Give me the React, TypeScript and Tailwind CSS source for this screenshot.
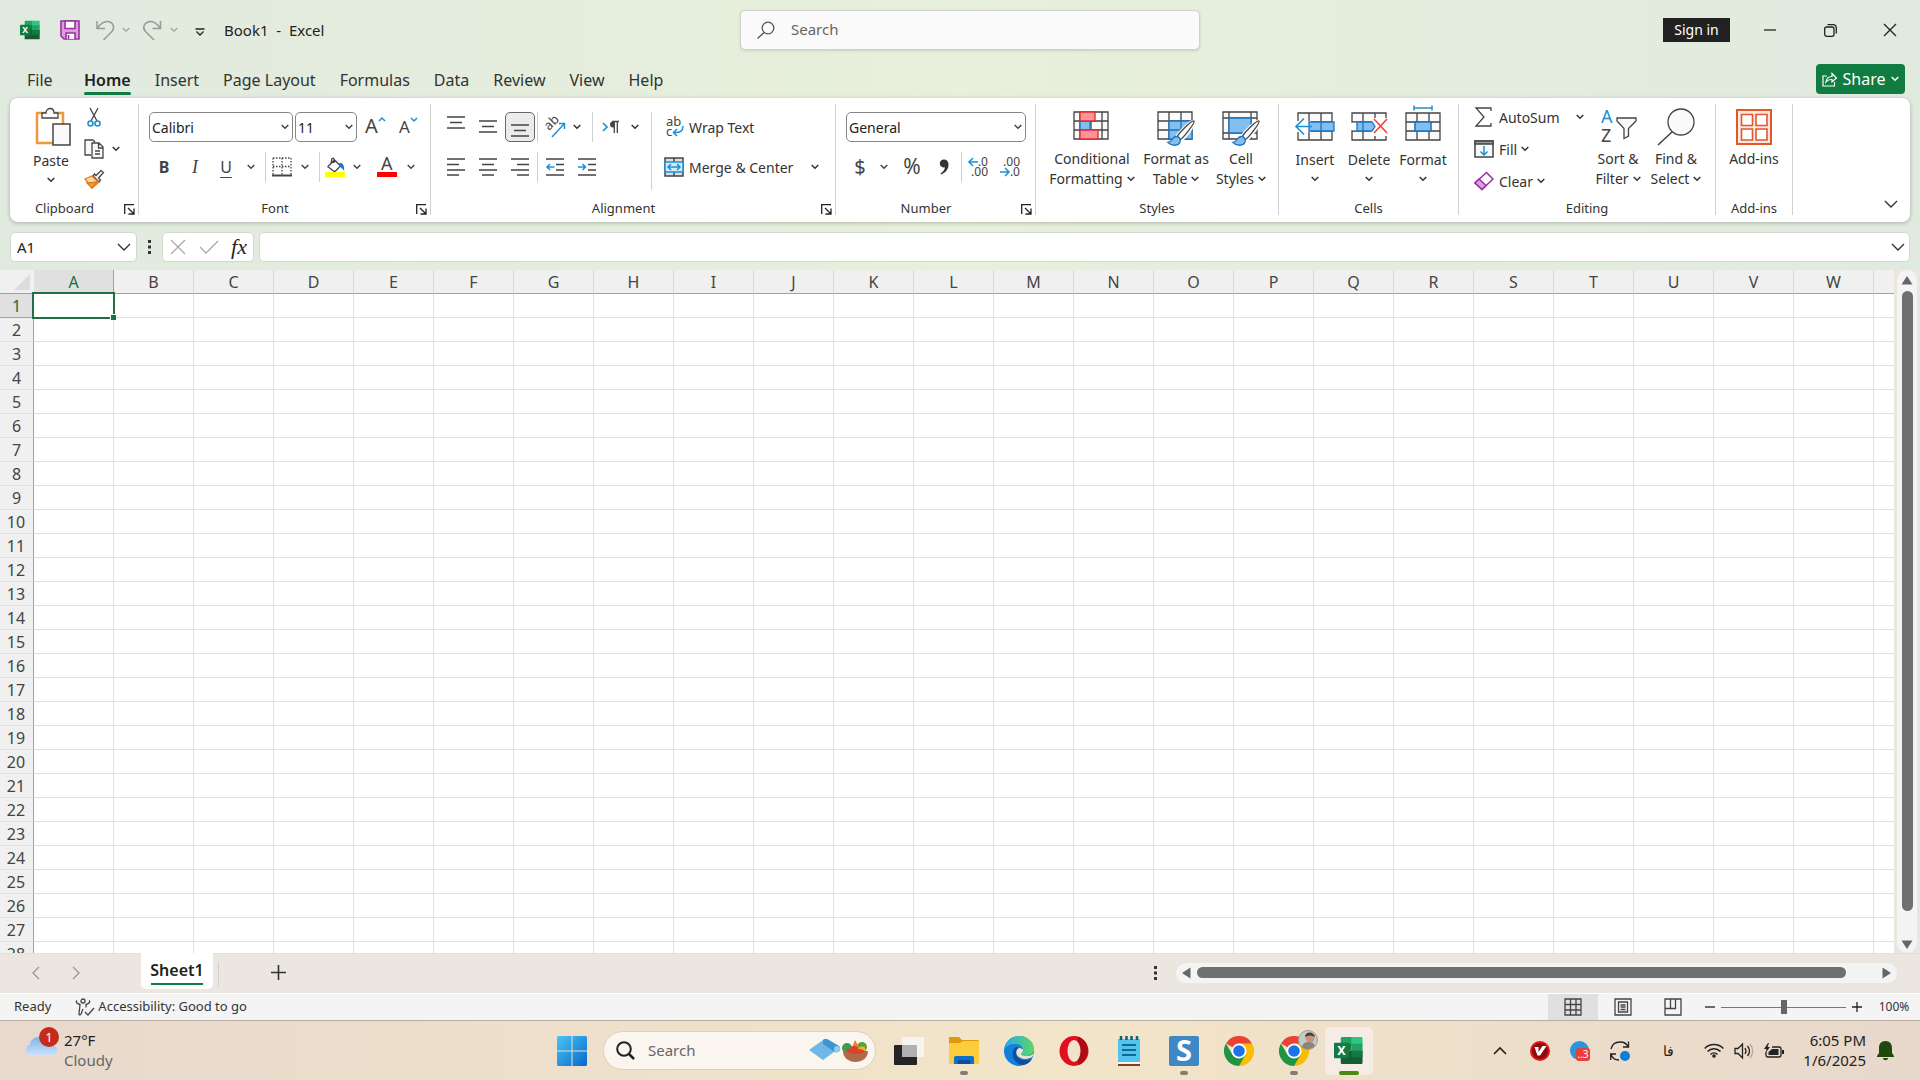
import type { ReactNode } from 'react'

const columns = 'ABCDEFGHIJKLMNOPQRSTUVW'.split('')
const rows = Array.from({ length: 28 }, (_, i) => i + 1)
const tabs = ['File', 'Home', 'Insert', 'Page Layout', 'Formulas', 'Data', 'Review', 'View', 'Help']

function Chevron({ className = '' }: { className?: string }) {
  return (
    <svg width="8" height="6" viewBox="0 0 8 6" fill="none" stroke="currentColor" strokeWidth="1.5" className={`shrink-0 ${className}`}>
      <path d="M.7 1 4 4.3 7.3 1" />
    </svg>
  )
}

function WideChevron() {
  return (
    <svg width="14" height="8" viewBox="0 0 14 8" fill="none" stroke="#333" strokeWidth="1.4" className="shrink-0">
      <path d="M1 1l6 6 6-6" />
    </svg>
  )
}

function Svg({ w, h, children, className = '' }: { w: number; h: number; children: ReactNode; className?: string }) {
  return (
    <svg width={w} height={h} viewBox={`0 0 ${w} ${h}`} fill="none" stroke="#444" strokeWidth="1.3" className={`shrink-0 overflow-visible ${className}`}>
      {children}
    </svg>
  )
}

function Btn({ label, className = '', children }: { label: string; className?: string; children: ReactNode }) {
  return (
    <button type="button" aria-label={label} className={`flex h-[30px] shrink-0 items-center justify-center ${className}`}>
      {children}
    </button>
  )
}

function More({ label, className = 'w-5' }: { label: string; className?: string }) {
  return (
    <Btn label={label} className={className}>
      <Chevron />
    </Btn>
  )
}

function Sep({ className = 'w-1' }: { className?: string }) {
  return (
    <div className={`flex h-[30px] shrink-0 justify-center ${className}`}>
      <div className="w-px bg-[#d0d0d0]" />
    </div>
  )
}

function Group({ name, launcher, className, children }: { name: string; launcher?: boolean; className: string; children: ReactNode }) {
  return (
    <section aria-label={name} className={`flex shrink-0 ${className}`}>
      <div className="flex min-w-0 flex-1 flex-col">
        <div className="flex-1">{children}</div>
        <div className="flex h-[25px] items-start">
          <div className="flex-1 text-center text-[13px] leading-[22px]">{name}</div>
          {launcher && (
            <button type="button" aria-label={`${name} settings`} className="mr-[3px] flex h-6 w-4 items-center justify-end">
              <Svg w={11} h={11}>
                <path d="M.7 10V.7H10M4 4l5.5 5.5M10 4.5V10H4.5" stroke="#222" />
              </Svg>
            </button>
          )}
        </div>
      </div>
      <div className="mt-1.5 mb-[7px] w-px bg-[#d0d0d0]" />
    </section>
  )
}

function Combo({ label, value, className }: { label: string; value: string; className: string }) {
  return (
    <div className={`relative h-[30px] shrink-0 ${className}`}>
      <select aria-label={label} className="h-full w-full appearance-none rounded-[5px] border border-[#868686] bg-white pl-0.5 text-[14px] text-[#222]">
        <option>{value}</option>
      </select>
      <Chevron className="pointer-events-none absolute top-3 right-1" />
    </div>
  )
}

type BigButtonProps = {
  lines: string[]
  icon: ReactNode
  chevron?: 'inline' | 'below'
  className: string
}

function BigButton({ lines, icon, chevron, className }: BigButtonProps) {
  return (
    <button type="button" className={`flex shrink-0 flex-col items-center text-[14px] leading-5 whitespace-nowrap ${className}`}>
      <span className={`flex ${chevron === 'below' ? 'h-[45px] items-start' : 'h-[44px] items-center'}`}>{icon}</span>
      {lines.map((line, i) => (
        <span key={line} className="flex items-center gap-1">
          {line}
          {chevron === 'inline' && i === lines.length - 1 && <Chevron />}
        </span>
      ))}
      {chevron === 'below' && (
        <span className="flex h-[18px] items-center">
          <Chevron />
        </span>
      )}
    </button>
  )
}

function ExcelLogo({ size }: { size: number }) {
  return (
    <svg width={size} height={size} viewBox="0 0 30 28" className="shrink-0">
      <path d="M8 0h11v9H7V1z" fill="#21a366" />
      <path d="M18 0h10.500q1 0 1 1v8H18z" fill="#33c481" />
      <path d="M7 7h11v7H7z" fill="#107c41" />
      <path d="M18 7h11.500v7H18z" fill="#21a366" />
      <path d="M7 14h22.500v13q0 1-1 1H8q-1 0-1-1z" fill="#185c37" />
      <path d="M18 14h11.500v7H18z" fill="#107c41" />
      <rect y="6" width="15.500" height="16" rx="1" fill="#107c41" />
      <text x="7.700" y="18.500" textAnchor="middle" fontSize="13" fontWeight="700" fill="#fff">X</text>
    </svg>
  )
}

function TitleBar() {
  return (
    <header className="grid h-[60px] grid-cols-[1fr_460px_1fr] items-start pl-5">
      <div className="flex h-[60px] items-center">
        <ExcelLogo size={20} />
        <Btn label="Save" className="ml-5 w-5">
          <Svg w={20} h={20}>
            <path d="M1 1h18v18H4l-3-3z" fill="#d9a0dc" stroke="#9b2fa3" strokeWidth="1.600" />
            <path d="M5 1h10v7.500H5zM6 19v-6h9v6" fill="#fff" stroke="#9b2fa3" strokeWidth="1.600" />
            <path d="M8.500 15v4" stroke="#9b2fa3" strokeWidth="1.600" />
          </Svg>
        </Btn>
        <Btn label="Undo" className="ml-4 w-5">
          <Svg w={20} h={21}>
            <path d="M1 1v7.500h8M1.500 8C5 3 9 1 12 1.500c6 1 7 7 3.500 10.500L7.500 20" stroke="#999" strokeWidth="1.500" />
          </Svg>
        </Btn>
        <Chevron className="ml-1.5 text-[#aaa]" />
        <Btn label="Redo" className="ml-3 w-5">
          <Svg w={20} h={21}>
            <path d="M18.500 1v7.500h-8M18 8C14.500 3 11 1 8 1.500 2 2.500 0 8 3.500 11.500L12 20" stroke="#999" strokeWidth="1.500" />
          </Svg>
        </Btn>
        <Chevron className="ml-2 text-[#aaa]" />
        <Btn label="Customize Quick Access Toolbar" className="ml-4 w-3">
          <Svg w={10} h={8} className="mt-1">
            <path d="M.5 1h9M1.500 3.500 5 7l3.500-3.500" stroke="#222" />
          </Svg>
        </Btn>
        <div className="ml-[18px] text-[15px] whitespace-pre">Book1  -  Excel</div>
      </div>
      <label className="mt-2.5 flex h-10 items-center rounded-[5px] border border-[#d0d3cc] bg-[#fafafa] pl-4 shadow-sm">
        <Svg w={18} h={18}>
          <circle cx="11" cy="7" r="5.800" stroke="#555" />
          <path d="M7 11.500.5 17.500" stroke="#555" />
        </Svg>
        <input type="search" aria-label="Search commands" placeholder="Search" className="ml-4 min-w-0 flex-1 bg-transparent pb-0.5 text-[15px] outline-none placeholder:text-[#666]" />
      </label>
      <div className="flex h-[60px] items-center justify-end">
        <button type="button" className="h-6 w-[67px] bg-[#222] text-[14px] leading-6 text-white">Sign in</button>
        <Btn label="Minimize" className="ml-[10px] w-[60px]">
          <Svg w={12} h={12}><path d="M0 6h12" stroke="#222" /></Svg>
        </Btn>
        <Btn label="Restore" className="w-[60px]">
          <Svg w={13} h={13}>
            <rect x=".700" y="3" width="9.300" height="9.300" rx="2" stroke="#222" />
            <path d="M3.500.700H9q3.300 0 3.300 3.300V9.500" stroke="#222" />
          </Svg>
        </Btn>
        <Btn label="Close" className="w-[60px]">
          <Svg w={14} h={14}><path d="M1 1l12 12M13 1 1 13" stroke="#222" /></Svg>
        </Btn>
      </div>
    </header>
  )
}

function TabBar() {
  return (
    <nav className="flex h-[38px] items-start pr-[15px] pl-[27px]">
      {tabs.map((tab) => (
        <a
          key={tab}
          href="#"
          className={`mr-6 flex h-9 flex-col pt-2 text-[16px] leading-6 whitespace-nowrap ${tab === 'Home' ? 'font-semibold text-[#222]' : 'text-[#333]'} ${tab === 'File' ? 'w-[33px]' : ''}`}
        >
          {tab}
          {tab === 'Home' && <span className="h-[3px] w-full rounded-sm bg-[#107c41]" />}
        </a>
      ))}
      <button type="button" className="mt-1 ml-auto flex h-[30px] w-[89px] items-center justify-center gap-1.5 rounded-[4px] bg-[#107c41] text-[16px] text-white">
        <Svg w={15} h={15}>
          <path d="M5 4H1v10h11.500v-4M4 10c.5-4 3-5.500 6-5.500V1.500L14.500 6 10 10V7.500C7 7.300 5.500 8 4 10z" stroke="#fff" strokeWidth="1.200" />
        </Svg>
        Share
        <Chevron />
      </button>
    </nav>
  )
}

function GridIcon({ kind }: { kind: 'conditional' | 'table' | 'cell' }) {
  return (
    <Svg w={38} h={36} className="mt-1">
      {kind === 'cell' ? (
        <>
          <path d="M1 1h34v27H1z" fill="#fafafa" />
          <path d="M7 1v27M29 1v27M1 7h34M1 22h34" />
          <path d="M7 7h22v15H7z" fill="#83beec" stroke="#1a76c5" />
        </>
      ) : (
        <>
          <path d="M1 1h34v27H1z" fill="#fafafa" />
          <path d="M1 10h34M1 19h34" />
        </>
      )}
      {kind === 'conditional' && (
        <>
          <path d="M7 1v27M29 1v27M18 1v27" />
          <path d="M7 10h10v9H7z" fill="#83beec" stroke="#1a76c5" />
          <path d="M7 1h15v9H7zM7 19h18v9H7z" fill="#ff9199" stroke="#d92f2f" />
        </>
      )}
      {kind === 'table' && (
        <>
          <path d="M12 1v27M24 1v27" />
          <path d="M12 10h23v18H12z" fill="#83beec" stroke="#1a76c5" />
          <path d="M24 10v18M12 19h23" stroke="#1a76c5" />
        </>
      )}
      {kind !== 'conditional' && (
        <>
          <path d="M37 10.500c-2-1.500-16 13-16.500 15.500l3 3C26 28 38.500 12 37 10.500z" fill="#fff" stroke="#fff" strokeWidth="4" />
          <path d="M37 10c-2-1.500-16 13-16.500 15.500l3 3C26 27.500 38.500 11.500 37 10z" fill="#fafafa" />
          <path d="M11 31.500c4 0 4-6 8-6 3 0 5 2.500 4 5.500-1.500 4-8 4.500-12 .5z" fill="#83beec" stroke="#1a76c5" />
        </>
      )}
    </Svg>
  )
}

function CellsIcon({ kind }: { kind: 'insert' | 'delete' | 'format' }) {
  return (
    <Svg w={40} h={36}>
      <path d="M3 8h34v27H3zM3 17h34M3 26h34M14 8v27M26 8v27" fill="#fafafa" />
      {kind === 'insert' && (
        <>
          <path d="M0 16h16v11H0z" fill="#fff" stroke="none" />
          <path d="M14 17h25v9H14zM26 17v9" fill="#83beec" stroke="#1a76c5" />
          <path d="M17 21.500H1M9 13.500l-8 8 8 8" stroke="#1e8fd5" strokeWidth="1.600" />
        </>
      )}
      {kind === 'delete' && (
        <>
          <path d="M22 13h18v18H22zM1 17.700h7v7.600H1z" fill="#fff" stroke="none" />
          <path d="M8 17h15l3 4.500-3 4.500H8zM14 17v9" fill="#83beec" stroke="#1a76c5" />
          <path d="m25 14 13 14M38 14 25 28" stroke="#f0443a" strokeWidth="1.600" />
        </>
      )}
      {kind === 'format' && (
        <>
          <path d="M12 17h16v9H12z" fill="#83beec" stroke="#1a76c5" strokeWidth="1.600" />
          <path d="M11 3h18M11 .5v5M29 .5v5" stroke="#1e8fd5" strokeWidth="1.500" />
        </>
      )}
    </Svg>
  )
}

function ClipboardGroup() {
  return (
    <Group name="Clipboard" launcher className="w-[129px]">
      <div className="flex">
        <button type="button" className="ml-[15px] flex w-[52px] flex-col items-center pt-[9px] text-[14px] leading-5">
          <Svg w={36} h={40} className="ml-1">
            <path d="M2 6h26v30H2z" fill="#fff" stroke="#ed9a3a" strokeWidth="2.500" />
            <path d="M7 6h4c0-6 8-6 8 0h4v5H7z" fill="#fafafa" />
            <path d="M18 17h17v21H18z" fill="#fafafa" strokeWidth="1.500" />
          </Svg>
          <span className="mt-1">Paste</span>
          <Chevron className="mt-1.5" />
        </button>
        <div className="ml-[5px] flex flex-col">
          <Btn label="Cut" className="mt-1 w-6">
            <Svg w={14} h={20}>
              <path d="M3 1l7 13M11 1 4 14" />
              <circle cx="3.500" cy="16.500" r="2.500" stroke="#1e8fd5" strokeWidth="1.600" />
              <circle cx="10.500" cy="16.500" r="2.500" stroke="#1e8fd5" strokeWidth="1.600" />
            </Svg>
          </Btn>
          <div className="mt-0.5 flex">
            <Btn label="Copy" className="w-6">
              <Svg w={20} h={20}>
                <path d="M7 16H1V1h8l2 2" fill="#fafafa" />
                <path d="M8 4h7l4 4v11H8zM14.500 4v5H19M11 12h5M11 15h5" fill="#fafafa" />
              </Svg>
            </Btn>
            <More label="Copy options" />
          </div>
          <Btn label="Format Painter" className="w-6">
            <Svg w={20} h={20}>
              <path d="M9 7l6 6 1.500-2-2-2 5-5.500-2.500-2-5 5-1.500-1.500z" fill="#fafafa" />
              <path d="M1 10l7-3 6.500 6.500L8 19z" fill="#fbd9a8" stroke="#e07a1f" />
              <path d="M3 14l10-1-5 6z" fill="#ee9b45" stroke="#e07a1f" />
            </Svg>
          </Btn>
        </div>
      </div>
    </Group>
  )
}

function FontGroup() {
  return (
    <Group name="Font" launcher className="w-[292px]">
      <div className="flex flex-col gap-2.5 pt-3.5 pl-2.5 text-[#444]">
        <div className="flex">
          <Combo label="Font" value="Calibri" className="w-[144px]" />
          <Combo label="Font size" value="11" className="ml-0.5 w-[62px]" />
          <Btn label="Increase font size" className="w-9">
            <Svg w={20} h={22}>
              <text x="0" y="17" fontSize="20" fill="#444" stroke="none">A</text>
              <path d="M14 5l3-3 3 3" stroke="#1e8fd5" strokeWidth="1.500" />
            </Svg>
          </Btn>
          <Btn label="Decrease font size" className="w-[30px]">
            <Svg w={18} h={22}>
              <text x="0" y="17" fontSize="17" fill="#444" stroke="none">A</text>
              <path d="M12 2l3 3 3-3" stroke="#1e8fd5" strokeWidth="1.500" />
            </Svg>
          </Btn>
        </div>
        <div className="flex">
          <Btn label="Bold" className="w-[30px] text-[16px] font-bold">B</Btn>
          <Btn label="Italic" className="w-8 font-[Liberation_Serif] text-[18px] italic">I</Btn>
          <Btn label="Underline" className="w-[30px] text-[16px] underline underline-offset-4">U</Btn>
          <More label="Underline options" />
          <Sep className="w-2" />
          <Btn label="Borders" className="w-[26px]">
            <Svg w={20} h={20}>
              <path d="M1 1h18v17M1 1v17M10 1v17M1 9.500h18" strokeDasharray="1.500 1.500" />
              <path d="M0 18.500h20" strokeWidth="2" />
            </Svg>
          </Btn>
          <More label="Border options" />
          <Sep className="w-2" />
          <Btn label="Fill color" className="w-6">
            <Svg w={20} h={20}>
              <path d="M3 9.500 9.500 3l6 6-5 5q-1 1-2 0l-4.500-3.500q-1.500-.500-1-1zM9 6V2.500q0-2-2-1L6 6.500" />
              <path d="M14 7c3-1 4.500 1 4.500 5l-2-2z" fill="#1a76c5" stroke="#1a76c5" />
              <path d="M0 15h20v5H0z" fill="#ff0" stroke="none" />
            </Svg>
          </Btn>
          <More label="Fill color options" />
          <Btn label="Font color" className="ml-1.5 w-7">
            <Svg w={20} h={20}>
              <text x="4" y="13" fontSize="18" fill="#444" stroke="none">A</text>
              <path d="M0 15h20v5H0z" fill="red" stroke="none" />
            </Svg>
          </Btn>
          <More label="Font color options" />
        </div>
      </div>
    </Group>
  )
}

function AlignmentGroup() {
  return (
    <Group name="Alignment" launcher className="w-[405px]">
      <div className="flex pt-3.5 pl-2.5">
        <div className="flex w-[210px] flex-col gap-2.5">
          <div className="flex">
            <Btn label="Top align" className="w-[30px] pb-2">
              <Svg w={18} h={14}><path d="M0 1h18M3 6.500h12M0 12h18" /></Svg>
            </Btn>
            <Btn label="Middle align" className="ml-0.5 w-[30px]">
              <Svg w={18} h={14}><path d="M0 1h18M3 6.500h12M0 12h18" /></Svg>
            </Btn>
            <Btn label="Bottom align" className="ml-0.5 w-[30px] rounded-[5px] border border-[#666] bg-[#ebebeb] pt-2">
              <Svg w={18} h={14}><path d="M0 1h18M3 6.500h12M0 12h18" /></Svg>
            </Btn>
            <Sep />
            <Btn label="Orientation" className="w-8">
              <Svg w={22} h={22}>
                <text x="0" y="0" fontSize="13" fill="#444" stroke="none" transform="translate(5 15) rotate(-45)">ab</text>
                <path d="M8 21 20 8M15 7.500h5.500V13" stroke="#1e8fd5" strokeWidth="1.500" />
              </Svg>
            </Btn>
            <More label="Orientation options" className="w-3" />
            <Sep className="w-[18px]" />
            <Btn label="Text direction" className="w-5">
              <Svg w={18} h={14}>
                <path d="M1 3l4 4-4 4" stroke="#1e8fd5" strokeWidth="1.700" />
                <path d="M16 1.500h-5a2.500 2.500 0 0 0 0 6h1v-6z" fill="#444" stroke="none" />
                <path d="M10 1.500h7M12.300 1.500V13M15.300 1.500V13" />
              </Svg>
            </Btn>
            <More label="Text direction options" className="w-7" />
          </div>
          <div className="flex">
            <Btn label="Align left" className="w-[30px]">
              <Svg w={18} h={18}><path d="M0 1h18M0 6.500h12M0 12h18M0 17h12" /></Svg>
            </Btn>
            <Btn label="Center" className="ml-0.5 w-[30px]">
              <Svg w={18} h={18}><path d="M0 1h18M3 6.500h12M0 12h18M3 17h12" /></Svg>
            </Btn>
            <Btn label="Align right" className="ml-0.5 w-[30px]">
              <Svg w={18} h={18}><path d="M0 1h18M6 6.500h12M0 12h18M6 17h12" /></Svg>
            </Btn>
            <Sep />
            <Btn label="Decrease indent" className="w-8">
              <Svg w={18} h={18}>
                <path d="M0 1h18M10 6.500h8M10 12h8M0 17h18" />
                <path d="M8.500 9H1M4 6 1 9l3 3" stroke="#1e8fd5" strokeWidth="1.500" />
              </Svg>
            </Btn>
            <Btn label="Increase indent" className="w-8">
              <Svg w={18} h={18}>
                <path d="M0 1h18M10 6.500h8M10 12h8M0 17h18" />
                <path d="M0 9h7.500M4.500 6l3 3-3 3" stroke="#1e8fd5" strokeWidth="1.500" />
              </Svg>
            </Btn>
          </div>
        </div>
        <div className="h-[78px] w-px bg-[#d0d0d0]" />
        <div className="flex flex-col gap-2.5 pl-3 text-[14px]">
          <button type="button" className="flex h-[30px] items-center gap-[5px]">
            <Svg w={20} h={22}>
              <text x="2" y="10" fontSize="13" fill="#444" stroke="none">ab</text>
              <text x="2" y="20" fontSize="13" fill="#444" stroke="none">c</text>
              <path d="M19 10c0 5-3 7-9 6.500M13 13l-3.500 3.500L13 20" stroke="#1e8fd5" strokeWidth="1.500" />
            </Svg>
            Wrap Text
          </button>
          <div className="flex">
            <button type="button" className="flex h-[30px] items-center gap-[5px] whitespace-nowrap">
              <Svg w={20} h={20}>
                <path d="M1 1h18v18H1zM10 1v4M10 15v4" fill="#ddd" strokeWidth="1.500" />
                <path d="M1 5h18v10H1z" fill="#d6ebfa" stroke="#1e8fd5" strokeWidth="1.500" />
                <path d="M4 10h12M7 7l-3 3 3 3M13 7l3 3-3 3" stroke="#1e8fd5" strokeWidth="1.500" />
              </Svg>
              Merge &amp; Center
            </button>
            <More label="Merge options" className="ml-3 w-5" />
          </div>
        </div>
      </div>
    </Group>
  )
}

function NumberGroup() {
  return (
    <Group name="Number" launcher className="w-[200px]">
      <div className="flex flex-col gap-2.5 pt-3.5 pl-2.5 text-[#444]">
        <Combo label="Number format" value="General" className="w-[180px]" />
        <div className="flex">
          <Btn label="Accounting format" className="w-7 text-[20px]">$</Btn>
          <More label="Currency options" />
          <Btn label="Percent style" className="w-9 text-[21px]">%</Btn>
          <Btn label="Comma style" className="w-7">
            <Svg w={10} h={16}>
              <path d="M5 .5a4 4 0 1 0 1 7.800C5.500 11 4 13 1.500 14.500l.5 1C7 13.500 9.500 10 9.500 5.500 9.500 2.500 8 .5 5 .5z" fill="#333" stroke="none" />
            </Svg>
          </Btn>
          <Sep className="w-1.5" />
          <Btn label="Increase decimal" className="w-7">
            <Svg w={21} h={22}>
              <text x="20" y="10" textAnchor="end" fontSize="12" fill="#444" stroke="none">.0</text>
              <text x="20" y="20" textAnchor="end" fontSize="12" fill="#444" stroke="none">.00</text>
              <path d="M10 6H1M5 2 1 6l4 4" stroke="#1e8fd5" strokeWidth="1.500" />
            </Svg>
          </Btn>
          <Btn label="Decrease decimal" className="w-9">
            <Svg w={21} h={22}>
              <text x="20" y="10" textAnchor="end" fontSize="12" fill="#444" stroke="none">.00</text>
              <text x="20" y="20" textAnchor="end" fontSize="12" fill="#444" stroke="none">.0</text>
              <path d="M0 16h9M5 12l4 4-4 4" stroke="#1e8fd5" strokeWidth="1.500" />
            </Svg>
          </Btn>
        </div>
      </div>
    </Group>
  )
}

function EditingGroup() {
  return (
    <Group name="Editing" className="w-[257px]">
      <div className="flex">
        <div className="flex w-[130px] flex-col gap-0.5 pt-1 pl-[15px] text-[14px]">
          <div className="flex">
            <button type="button" className="flex h-[30px] items-center gap-[5px]">
              <Svg w={20} h={20}><path d="M17 4V1H2l8 9-8 9h15v-3" /></Svg>
              AutoSum
            </button>
            <More label="AutoSum options" className="ml-2.5 w-5" />
          </div>
          <button type="button" className="flex h-[30px] items-center gap-[5px]">
            <Svg w={20} h={18}>
              <path d="M1 1h18v16H1z" fill="#fafafa" strokeWidth="1.500" />
              <path d="M1 1h18v3H1z" fill="#999" />
              <path d="M10 6v9M6.500 11.500 10 15l3.500-3.500" stroke="#1e8fd5" strokeWidth="1.500" />
            </Svg>
            <span className="flex items-center gap-1">Fill <Chevron /></span>
          </button>
          <button type="button" className="flex h-[30px] items-center gap-[5px]">
            <Svg w={20} h={20}>
              <path d="M12.500 1.500 19 8 8 18.500 1 12z" fill="#fff" stroke="#9b2fa3" strokeWidth="1.500" />
              <path d="m5 8 7 6.500-4 4L1 12z" fill="#d9a0dc" stroke="#9b2fa3" strokeWidth="1.500" />
            </Svg>
            <span className="flex items-center gap-1">Clear <Chevron /></span>
          </button>
        </div>
        <BigButton
          className="w-[58px] pt-[7px]"
          lines={['Sort &', 'Filter']}
          chevron="inline"
          icon={
            <Svg w={37} h={36}>
              <text x="1" y="14" fontSize="18" fill="#1e8fd5" stroke="none">A</text>
              <text x="1" y="33" fontSize="18" fill="#444" stroke="none">Z</text>
              <path d="M17 9h19v3l-7.500 7.500V27L24 29.500v-10L17 12z" fill="#fafafa" />
            </Svg>
          }
        />
        <BigButton
          className="w-[58px] pt-[7px]"
          lines={['Find &', 'Select']}
          chevron="inline"
          icon={
            <Svg w={38} h={38}>
              <circle cx="24" cy="14" r="13" fill="#fafafa" />
              <path d="M15 24 1 37" strokeWidth="1.600" />
            </Svg>
          }
        />
      </div>
    </Group>
  )
}

function Ribbon() {
  return (
    <div className="mx-2.5 flex h-[124px] rounded-lg bg-white text-[#333] shadow-[0_1px_4px_rgba(0,0,0,0.25)]">
      <ClipboardGroup />
      <FontGroup />
      <AlignmentGroup />
      <NumberGroup />
      <Group name="Styles" className="w-[243px]">
        <div className="flex pt-[7px] pl-[9px]">
          <BigButton className="w-[94px]" lines={['Conditional', 'Formatting']} chevron="inline" icon={<GridIcon kind="conditional" />} />
          <BigButton className="w-[74px]" lines={['Format as', 'Table']} chevron="inline" icon={<GridIcon kind="table" />} />
          <BigButton className="w-[56px]" lines={['Cell', 'Styles']} chevron="inline" icon={<GridIcon kind="cell" />} />
        </div>
      </Group>
      <Group name="Cells" className="w-[180px]">
        <div className="flex pt-[7px] pl-[9px]">
          <BigButton className="w-[54px]" lines={['Insert']} chevron="below" icon={<CellsIcon kind="insert" />} />
          <BigButton className="w-[54px]" lines={['Delete']} chevron="below" icon={<CellsIcon kind="delete" />} />
          <BigButton className="w-[54px]" lines={['Format']} chevron="below" icon={<CellsIcon kind="format" />} />
        </div>
      </Group>
      <EditingGroup />
      <Group name="Add-ins" className="w-[77px]">
        <BigButton
          className="w-full pt-[7px]"
          lines={['Add-ins']}
          icon={
            <Svg w={36} h={36}>
              <path d="M1 1h34v34H1z" fill="#fbe9e1" stroke="#e0592a" strokeWidth="2" />
              <path d="M5.500 5.500h11v11h-11zM20 5.500h11v11H20zM5.500 20h11v11h-11zM20 20h11v11H20z" fill="#fff" stroke="#e0592a" strokeWidth="1.600" />
            </Svg>
          }
        />
      </Group>
      <button type="button" aria-label="Collapse ribbon" className="ml-auto flex items-end pr-3 pb-3.5">
        <WideChevron />
      </button>
    </div>
  )
}

function FormulaBar() {
  return (
    <div className="flex items-center px-2.5 pt-[10px] pb-2">
      <div className="flex h-[30px] w-[127px] items-center rounded-[5px] border border-[#d3d8d0] bg-white pr-[5px]">
        <input type="text" aria-label="Name box" defaultValue="A1" className="min-w-0 flex-1 pl-1.5 text-[15px] outline-none" />
        <WideChevron />
      </div>
      <Svg w={3} h={14} className="mx-[11px]">
        <path d="M1.500 0v14" stroke="#333" strokeWidth="3" strokeDasharray="3 2.500" />
      </Svg>
      <div className="flex h-[30px] w-[92px] items-center justify-between rounded-[5px] border border-[#d3d8d0] bg-white pr-1.5 pl-[7px]">
        <button type="button" aria-label="Cancel">
          <Svg w={16} h={16}><path d="M1 1l14 14M15 1 1 15" stroke="#aaa" /></Svg>
        </button>
        <button type="button" aria-label="Enter">
          <Svg w={20} h={14}><path d="M1 7l6 6L19 1" stroke="#aaa" /></Svg>
        </button>
        <button type="button" className="font-[Liberation_Serif] text-[22px] leading-6 italic">fx</button>
      </div>
      <div className="ml-[5px] flex h-[30px] flex-1 items-center rounded-[5px] border border-[#d3d8d0] bg-white pr-1">
        <input type="text" aria-label="Formula bar" className="min-w-0 flex-1 outline-none" />
        <WideChevron />
      </div>
    </div>
  )
}

function Sheet() {
  return (
    <div className="flex min-h-0 flex-1">
      <div className="relative min-w-0 flex-1 overflow-hidden bg-white">
        <table className="w-[1954px] table-fixed border-separate border-spacing-0 text-[16px] leading-[22px] text-[#444]">
          <thead>
            <tr className="h-6">
              <th className="w-[34px] border-b border-[#a0a0a0] bg-[#f0f0f0] p-0">
                <svg width="16" height="16" viewBox="0 0 16 16" className="ml-[14px]">
                  <path d="M16 0v16H0z" fill="#dcdcdc" />
                </svg>
              </th>
              {[...columns, ''].map((c) => (
                <th
                  key={c}
                  className={`w-20 border-r border-b border-b-[#a0a0a0] p-0 font-normal ${c === 'A' ? 'border-r-[#a0a0a0] bg-[#e0e0e0] text-[#0f703b]' : 'border-r-[#d8d8d8] bg-[#f0f0f0]'}`}
                >
                  {c}
                </th>
              ))}
            </tr>
          </thead>
          <tbody>
            {rows.map((r) => (
              <tr key={r} className="h-6">
                <th
                  className={`border-r border-b border-r-[#a0a0a0] p-0 font-normal ${r > 9 ? 'pr-px' : ''} ${r === 1 ? 'border-b-[#a0a0a0] bg-[#e0e0e0] text-[#0f703b]' : 'border-b-[#e0e0e0] bg-[#f0f0f0]'}`}
                >
                  {r}
                </th>
                {[...columns, ''].map((c) => (
                  <td key={c} className="border-r border-b border-[#e0e0e0] p-0" />
                ))}
              </tr>
            ))}
          </tbody>
        </table>
        {/* active cell outline with its fill handle */}
        <div className="absolute top-[22px] left-8 h-[27px] w-[83px] border-2 border-[#1e7145]">
          <div className="absolute -right-[3px] -bottom-[3px] h-[6px] w-[6px] border-t border-l border-white bg-[#1e7145]" />
        </div>
      </div>
      <div className="flex w-[26px] flex-col items-center">
        <div className="flex w-5 flex-1 flex-col items-center rounded-[10px] bg-[#f4f4f4] pt-1.5 pb-1">
          <svg width="12" height="9" viewBox="0 0 12 9"><path d="M6 0l5.500 8.500H.5z" fill="#666" /></svg>
          <div className="mt-1.5 w-[11px] flex-1 rounded-full bg-[#707070]" />
          <svg width="12" height="9" viewBox="0 0 12 9" className="mt-[29px]"><path d="M6 9 .5.5h11z" fill="#666" /></svg>
        </div>
      </div>
    </div>
  )
}

function SheetTabs() {
  return (
    <div className="flex h-10 border-t border-[#e0e0e0] pb-0.5">
      <div className="flex w-[141px] items-center gap-8 pl-8">
        <button type="button" aria-label="Previous sheet"><Svg w={8} h={12}><path d="M7 0 1 6l6 6" stroke="#999" /></Svg></button>
        <button type="button" aria-label="Next sheet"><Svg w={8} h={12}><path d="M1 0l6 6-6 6" stroke="#999" /></Svg></button>
      </div>
      <button type="button" className="-mt-px flex h-9 w-[72px] flex-col items-center rounded-b-[5px] bg-white pt-[5px] text-[16px] leading-6 font-semibold text-[#222]">
        Sheet1
        <span className="mt-px h-0.5 w-[52px] bg-[#107c41]" />
      </button>
      <div className="mt-2 ml-[5px] h-6 w-px bg-[#d0d0d0]" />
      <button type="button" aria-label="New sheet" className="ml-[52px] flex items-center">
        <Svg w={15} h={15}><path d="M0 7.500h15M7.500 0v15" stroke="#333" strokeWidth="1.600" /></Svg>
      </button>
      <div className="ml-auto flex items-center pr-[23px]">
        <Svg w={3} h={14}>
          <path d="M1.500 0v14" stroke="#333" strokeWidth="3" strokeDasharray="3 2.500" />
        </Svg>
        <div className="ml-[19px] flex h-5 w-[721px] items-center rounded-full bg-[#f4f4f4] pr-1.5 pl-1.5">
          <svg width="9" height="12" viewBox="0 0 9 12"><path d="M0 6l8.500-5.500v11z" fill="#666" /></svg>
          <div className="ml-1.5 h-[11px] flex-1 rounded-full bg-[#707070]" />
          <svg width="9" height="12" viewBox="0 0 9 12" className="ml-9"><path d="M9 6 .5.5v11z" fill="#666" /></svg>
        </div>
      </div>
    </div>
  )
}

function StatusBar() {
  return (
    <div className="flex h-[27px] items-center border-t border-white bg-[#f4f4f4] pr-2.5 pl-3.5 text-[#333]">
      <span className="text-[13px]">Ready</span>
      <button type="button" className="ml-6 flex items-center gap-[3px] text-[13px]">
        <Svg w={20} h={18}>
          <circle cx="8" cy="3" r="2" />
          <path d="M2 2.500C0 4.500 3 6 5 6.500L4 16c0 1.500 1.500 1 2 0l2-5M14 2.500c2 2-1 3.500-3 4v3M10 14l3 3 6-7" />
        </Svg>
        Accessibility: Good to go
      </button>
      <div className="ml-auto flex h-full items-center">
        <Btn label="Normal view" className="h-full! w-[50px] bg-[#e0e0e0]">
          <Svg w={18} h={18}><path d="M1 1h16v16H1zM1 6.500h16M1 12h16M6.500 1v16M12 1v16" /></Svg>
        </Btn>
        <Btn label="Page layout view" className="w-[50px]">
          <Svg w={18} h={18}><path d="M1 1h16v16H1zM4.500 4h9v10h-9zM6.500 7h5M6.500 9h5M6.500 11.500h5" /></Svg>
        </Btn>
        <Btn label="Page break preview" className="w-[50px]">
          <Svg w={18} h={18}><path d="M1 1h16v16H1zM1 10.500h10.500V1M6.500 1v9.500" /></Svg>
        </Btn>
        <button type="button" aria-label="Zoom out" className="ml-[7px]"><Svg w={10} h={10}><path d="M0 5h10" stroke="#222" /></Svg></button>
        <input
          type="range"
          aria-label="Zoom"
          defaultValue={50}
          className="mx-1.5 h-4 w-[125px] appearance-none bg-transparent [&::-webkit-slider-runnable-track]:h-px [&::-webkit-slider-runnable-track]:bg-[#777] [&::-webkit-slider-thumb]:-mt-[7px] [&::-webkit-slider-thumb]:h-[14px] [&::-webkit-slider-thumb]:w-1.5 [&::-webkit-slider-thumb]:appearance-none [&::-webkit-slider-thumb]:bg-[#666]"
        />
        <button type="button" aria-label="Zoom in"><Svg w={10} h={10}><path d="M0 5h10M5 0v10" stroke="#222" /></Svg></button>
        <button type="button" className="ml-4 w-8 text-[12px]">100%</button>
      </div>
    </div>
  )
}

function ChromeLogo() {
  return (
    <svg width="30" height="30" viewBox="0 0 30 30">
      <path d="M15 15 2 7.500A15 15 0 0 1 28 7.500z" fill="#ea4335" />
      <path d="M15 15V7.500h13A15 15 0 0 1 15 30z" fill="#fbbc04" />
      <path d="M2 7.500 8.500 18.700 15 22l6.500-3.300L15 30A15 15 0 0 1 2 7.500z" fill="#229342" />
      <circle cx="15" cy="15" r="7.500" fill="#fff" />
      <circle cx="15" cy="15" r="5.800" fill="#1a73e8" />
    </svg>
  )
}

function TaskApp({ label, running, active, children }: { label: string; running?: boolean; active?: boolean; children: ReactNode }) {
  return (
    <button type="button" aria-label={label} className="flex h-full w-[55px] items-center justify-center">
      <span className={`relative flex h-12 w-12 items-center justify-center rounded-[5px] ${active ? 'bg-[#f5ece5]' : ''}`}>
        {children}
        {running && <span className="absolute bottom-0 h-1 w-2 rounded-full bg-[#857b73]" />}
        {active && <span className="absolute bottom-0 h-1 w-5 rounded-full bg-[#4a8a10]" />}
      </span>
    </button>
  )
}

function Taskbar() {
  return (
    <footer className="grid h-[60px] grid-cols-[1fr_auto_1fr] border-t border-[#b9aea4] bg-linear-to-r from-[#e8d9cd] via-[#f3e5c8] via-55% to-[#e8d8cc] text-[15px] text-[#222]">
      <button type="button" className="flex items-start pt-1.5 pl-[25px] text-left leading-5">
        <svg width="36" height="30" viewBox="0 0 36 30">
          <defs>
            <linearGradient id="cloud" x2="0" y2="1">
              <stop stopColor="#7fb4e6" />
              <stop offset="1" stopColor="#cfe3fa" />
            </linearGradient>
          </defs>
          <path d="M6 29a6 6 0 0 1-1-11.500C6 10 16 7 20 14c5-1 7 2 7 4a5.500 5.500 0 0 1-1 11z" fill="url(#cloud)" />
          <circle cx="24" cy="10" r="10" fill="#c42b1c" />
          <text x="24" y="15" textAnchor="middle" fontSize="13" fill="#fff">1</text>
        </svg>
        <span className="ml-[3px] flex flex-col pt-[3px]">
          <span>27°F</span>
          <span className="text-[#666]">Cloudy</span>
        </span>
      </button>

      <div className="flex items-center">
        <TaskApp label="Start">
          <svg width="30" height="30" viewBox="0 0 30 30">
            <defs>
              <linearGradient id="start" x2="1" y2="1">
                <stop stopColor="#4cc5f5" />
                <stop offset="1" stopColor="#0568c9" />
              </linearGradient>
            </defs>
            <path d="M1 0h13.500v14.500H0V1zM15.500 0H29l1 1v13.500H15.500zM0 15.500h14.500V30H1l-1-1zM15.500 15.500H30V29l-1 1H15.500z" fill="url(#start)" />
          </svg>
        </TaskApp>
        <label className="mr-[5px] ml-1 flex h-[39px] w-[273px] items-center rounded-full border border-[#dccfc3] bg-[#faf5ef] pr-1.5 pl-3">
          <Svg w={19} h={19}>
            <circle cx="8" cy="8" r="6.800" stroke="#222" strokeWidth="2" />
            <path d="m13 13 5 5" stroke="#222" strokeWidth="2.500" />
          </Svg>
          <input type="search" aria-label="Search Windows" placeholder="Search" className="ml-[13px] min-w-0 flex-1 bg-transparent outline-none placeholder:text-[#666]" />
          <svg width="60" height="24" viewBox="0 0 60 24">
            <path d="M0 11 14 1l15 9-15 11z" fill="#6db8e6" />
            <path d="M14 1c2-2 4-1 6 0l10 6c3 3 0 8-4 6L14 5z" fill="#3f93cf" />
            <circle cx="28" cy="10" r="3" fill="#8fd0f2" />
            <circle cx="38" cy="9" r="5" fill="#3f9a4b" />
            <circle cx="53" cy="8" r="5" fill="#58a53e" />
            <path d="M43 9l3-8 5 9z" fill="#ef7d22" />
            <circle cx="45" cy="11" r="4" fill="#dd3c30" />
            <circle cx="53" cy="11" r="3.500" fill="#f3b321" />
            <path d="M34 12h25c0 7-6 11-12.500 11S34 19 34 12z" fill="#b0694a" />
            <path d="M37 12c3-3 6-3 9-1 3-2 7-1 10 1-2 4-16 4-19 0z" fill="#d8442c" />
          </svg>
        </label>
        <TaskApp label="Task view">
          <svg width="30" height="28" viewBox="0 0 30 28">
            <rect y="8" width="23" height="20" rx="1" fill="#242424" />
            <rect x="8" width="22" height="20" rx="1" fill="#f4f4f4" fillOpacity=".95" />
            <rect x="8" y="8" width="15" height="12" fill="#b0b0b0" />
          </svg>
        </TaskApp>
        <TaskApp label="File Explorer" running>
          <svg width="30" height="27" viewBox="0 0 30 27">
            <path d="M0 1q0-1 1-1h9l3 3h16q1 0 1 1v10H0z" fill="#dd9b0c" />
            <path d="M0 6h11l3-2h15q1 0 1 1v21q0 1-1 1H1q-1 0-1-1z" fill="#fccc3d" />
            <path d="M5 27v-6q0-2 2-2h16q2 0 2 2v6z" fill="#0f70cc" />
            <path d="M9 23h12v4H9z" fill="#0a4f9e" />
          </svg>
        </TaskApp>
        <TaskApp label="Edge">
          <svg width="30" height="30" viewBox="0 0 30 30">
            <defs>
              <linearGradient id="edge">
                <stop stopColor="#2aa8e8" />
                <stop offset="1" stopColor="#5fd766" />
              </linearGradient>
            </defs>
            <circle cx="15" cy="15" r="15" fill="#1280d8" />
            <path d="M0 14C1 5 8 0 15 0c9 0 15 6 15 13 0 5-4 7-8 7-3 0-5-1-5-2 0-1 2-1 2-4 0-4-4-6-8-6C5 8 1 11 0 14z" fill="url(#edge)" />
            <path d="M12 11c-6 4-4 17 7 18 4-.5 7-3 9-6-8 3-16 0-16-6 0-3 2-4 3-5z" fill="#114d9e" />
            <path d="M15 12c-4 2-3 7 0 9 4 3 10 2 13 0l2-3-1 4-1 1 2 3V17c-2 3-6 3-8 3-3 0-5-1-5-2s2-1 2-4c0-1-2-2-4-2z" fill="#f1e3cb" />
          </svg>
        </TaskApp>
        <TaskApp label="Opera">
          <svg width="30" height="30" viewBox="0 0 30 30">
            <ellipse cx="15" cy="15" rx="14.500" ry="15" fill="#e2101e" />
            <path d="M19 1c12 3 14 23 0 28z" fill="#b00a14" />
            <ellipse cx="15" cy="15" rx="6.500" ry="11" fill="#f1e2cc" />
          </svg>
        </TaskApp>
        <TaskApp label="Notepad">
          <svg width="24" height="30" viewBox="0 0 24 30">
            <path d="M1 26h22v4H1z" fill="#8b3a1c" />
            <path d="M1 3h22v23H1z" fill="#52c3ea" />
            <path d="M1 26h22v2H1z" fill="#f5f5f5" />
            <path d="M5 9h14M5 14h14M5 19h14" stroke="#0d6a92" strokeWidth="1.800" />
            <path d="M4 0v4M9.500 0v4M14.500 0v4M20 0v4" stroke="#0d5f80" strokeWidth="2.500" />
          </svg>
        </TaskApp>
        <TaskApp label="Snagit" running>
          <svg width="30" height="30" viewBox="0 0 30 30" className="overflow-visible">
            <rect width="30" height="30" rx="2" fill="#3f87c5" />
            <text x="15" y="25" textAnchor="middle" fontSize="29" fontWeight="700" fill="#fff">S</text>
          </svg>
        </TaskApp>
        <TaskApp label="Chrome">
          <ChromeLogo />
        </TaskApp>
        <TaskApp label="Chrome profile" running>
          <ChromeLogo />
          <svg width="20" height="20" viewBox="0 0 20 20" className="absolute top-[3px] right-0">
            <circle cx="10" cy="10" r="9.500" fill="#c3cbc8" stroke="#a39c92" />
            <path d="M4 17c1-4 3-5 7-5s5 2 6 4q-6 6-13 1z" fill="#8d8578" />
            <circle cx="12" cy="8" r="4.500" fill="#c6957a" />
            <path d="M7 7c0-6 9-6 10 0-3-2-6-2-10 0z" fill="#4c3a30" />
          </svg>
        </TaskApp>
        <TaskApp label="Excel" active>
          <ExcelLogo size={29} />
        </TaskApp>
      </div>

      <div className="flex items-center justify-end pr-[26px]">
        <Btn label="Show hidden icons" className="w-10">
          <Svg w={14} h={9}><path d="m1 8 6-6 6 6" stroke="#222" strokeWidth="1.600" /></Svg>
        </Btn>
        <Btn label="Antivirus" className="w-10">
          <svg width="20" height="20" viewBox="0 0 20 20">
            <circle cx="10" cy="10" r="9" fill="#8a0d10" stroke="#e8141a" strokeWidth="2" />
            <path d="M4.500 6h4v5l4-6h4l-6.500 9.500H7.500z" fill="#fff" />
          </svg>
        </Btn>
        <Btn label="Messenger" className="w-10">
          <svg width="20" height="20" viewBox="0 0 20 20" className="overflow-visible">
            <circle cx="9.500" cy="9.500" r="9.500" fill="#2a94dc" />
            <rect x="6" y="7" width="14" height="13" rx="3" fill="#e8403a" />
            <text x="13" y="17" textAnchor="middle" fontSize="10" fill="#fff">..3</text>
          </svg>
        </Btn>
        <Btn label="Sync" className="w-10">
          <Svg w={20} h={20}>
            <path d="M1 8C2 3 6 1 10 1c4 0 7 2 8 5M18.500.500V6H13M9 19c-4 0-7-2-8-6M.700 19v-6H6" stroke="#222" />
            <circle cx="15" cy="15" r="5" fill="#0a7ed9" stroke="none" />
          </Svg>
        </Btn>
        <Btn label="Input language" className="w-14 text-[14px]">فا</Btn>
        <button type="button" aria-label="Network, volume and battery" className="flex items-center gap-2.5 pl-2">
          <Svg w={20} h={15}>
            <path d="M.700 5.500a13 13 0 0 1 18.600 0M3.500 8.500a9 9 0 0 1 13 0M6.500 11.500a5 5 0 0 1 7 0" stroke="#222" strokeWidth="1.500" />
            <circle cx="10" cy="13" r="1.800" fill="#222" stroke="none" />
          </Svg>
          <Svg w={20} h={16}>
            <path d="M1 5.500h3L8.500 1v14L4 10.500H1zM11 5q2 3 0 6M13.500 3q4 5 0 10" stroke="#222" />
            <path d="M16 1q5.500 7 0 14" stroke="#b8a99f" />
          </Svg>
          <Svg w={20} h={16}>
            <path d="M8 4h7q2 0 2 2v6q0 2-2 2H4q-2 0-2-2V9" stroke="#222" />
            <path d="M8 6h6.500v6H4.500V9z" fill="#222" stroke="none" />
            <path d="M18 7h2v4h-2zM4 0 0 6h2.500L1.500 10 6 4H3.500L5 0z" fill="#222" stroke="none" />
          </Svg>
        </button>
        <button type="button" className="ml-3 flex w-[70px] flex-col items-end pb-0.5 leading-5 whitespace-nowrap">
          <span>6:05 PM</span>
          <span>1/6/2025</span>
        </button>
        <button type="button" aria-label="Notifications" className="ml-[11px]">
          <svg width="17" height="20" viewBox="0 0 17 20">
            <path d="M8.500 0C4 0 2 3 2 7v5l-2 3v1h17v-1l-2-3V7c0-4-2-7-6.500-7zM6 17h5c0 3-5 3-5 0z" fill="#1f4a0c" />
          </svg>
        </button>
      </div>
    </footer>
  )
}

export default function App() {
  return (
    <div className="flex h-screen flex-col overflow-hidden bg-[#ebe6df] font-['Noto_Sans','Open_Sans',sans-serif] text-[#222]">
      <div className="bg-linear-to-r from-[#e0eadf] via-[#e8f0db] to-[#e0eadf]">
        <TitleBar />
        <TabBar />
        <Ribbon />
        <FormulaBar />
      </div>
      <Sheet />
      <SheetTabs />
      <StatusBar />
      <Taskbar />
    </div>
  )
}
